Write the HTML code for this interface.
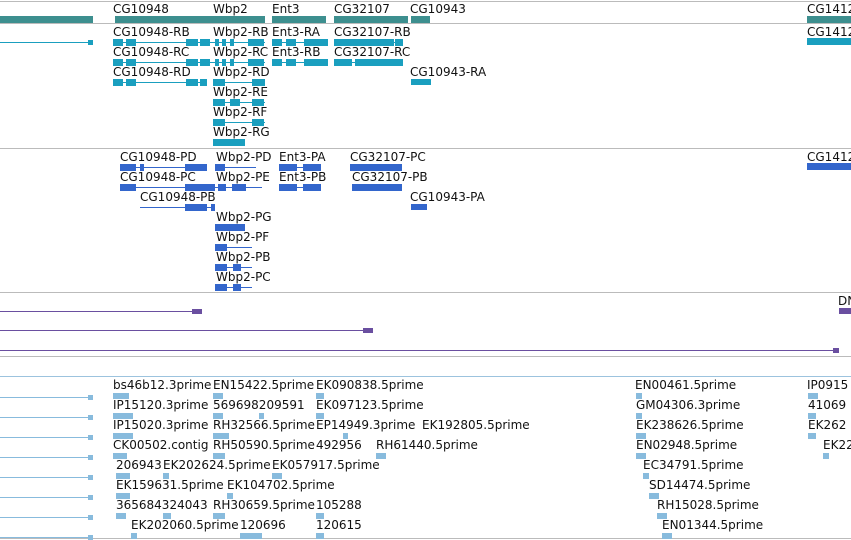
<!DOCTYPE html>
<html><head><meta charset="utf-8"><style>
html,body{margin:0;padding:0;width:851px;height:540px;overflow:hidden;background:#fff;position:relative;font-family:"DejaVu Sans","Liberation Sans",sans-serif}
.t{position:absolute;font-size:12px;line-height:14px;color:#111;white-space:nowrap}
.b{position:absolute}
</style></head><body>
<div id="r"></div>
<script>
var R=document.getElementById('r'),H='';
function t(x,y,s){H+='<div class="t" style="left:'+x+'px;top:'+y+'px">'+s+'</div>';}
function b(x,y,w,h,c){H+='<div class="b" style="left:'+x+'px;top:'+y+'px;width:'+w+'px;height:'+h+'px;background:'+c+'"></div>';}
function hl(x,y,w,c){b(x,y,w,1,c);}
// gene with blocks: cy center, from x1 to x2 line, blocks [[x,w],...]
function g(x1,x2,cy,bl,c,th){th=th||7;hl(x1,cy,x2-x1,c);bl.forEach(function(k){b(k[0],cy-Math.floor(th/2),k[1],th,c);});}
// separators
hl(0,1,851,'#bbb');hl(0,23,851,'#bbb');hl(0,148,851,'#bbb');hl(0,292,851,'#bbb');hl(0,356,851,'#bbb');hl(0,376,851,'#9cc3de');hl(0,538,851,'#bbb');
// track 1
var T='#3d8f8f';
t(113,2,'CG10948');t(213,2,'Wbp2');t(272,2,'Ent3');t(334,2,'CG32107');t(410,2,'CG10943');t(807,2,'CG1412');
b(0,16,93,7,T);b(115,16,150,7,T);b(272,16,54,7,T);b(334,16,74,7,T);b(411,16,19,7,T);b(807,16,44,7,T);
// track 2
var C='#1a9fbf';
g(0,93,42,[[88,5]],C,5);
t(113,25,'CG10948-RB');t(213,25,'Wbp2-RB');t(272,25,'Ent3-RA');t(334,25,'CG32107-RB');t(807,25,'CG1412');
g(113,265,42,[[113,10],[126,10],[186,12],[200,10],[215,4],[222,4],[230,4],[248,16]],C);
g(272,328,42,[[272,10],[286,10],[304,24]],C);g(334,403,42,[[334,60],[395,8]],C);b(807,38,44,7,C);
t(113,45,'CG10948-RC');t(213,45,'Wbp2-RC');t(272,45,'Ent3-RB');t(334,45,'CG32107-RC');
g(113,265,62,[[113,10],[126,10],[186,12],[200,10],[215,4],[222,4],[230,4],[248,16]],C);
g(272,328,62,[[272,10],[286,10],[304,24]],C);g(334,403,62,[[334,18],[355,48]],C);
t(113,65,'CG10948-RD');t(213,65,'Wbp2-RD');t(410,65,'CG10943-RA');
g(113,207,82,[[113,10],[126,10],[186,12],[200,7]],C);g(213,265,82,[[213,12],[252,13]],C);b(411,79,20,6,C);
t(213,85,'Wbp2-RE');g(213,265,102,[[213,12],[230,10],[252,12]],C);
t(213,105,'Wbp2-RF');g(213,265,122,[[213,12],[252,12]],C);
t(213,125,'Wbp2-RG');g(213,245,142,[[213,32]],C);
// track 3
var B='#3366cc';
t(120,150,'CG10948-PD');t(216,150,'Wbp2-PD');t(279,150,'Ent3-PA');t(350,150,'CG32107-PC');t(807,150,'CG1412');
g(120,207,167,[[120,16],[140,4],[185,22]],B);g(215,256,167,[[215,10]],B);g(279,321,167,[[279,18],[303,18]],B);g(350,402,167,[[350,44],[394,8]],B);b(807,163,44,7,B);
t(120,170,'CG10948-PC');t(216,170,'Wbp2-PE');t(279,170,'Ent3-PB');t(352,170,'CG32107-PB');
g(120,262,187,[[120,16],[185,30],[218,8],[232,14]],B);g(279,321,187,[[279,18],[303,18]],B);g(352,402,187,[[352,42],[394,8]],B);
t(140,190,'CG10948-PB');t(410,190,'CG10943-PA');g(140,215,207,[[185,22],[211,4]],B);b(411,204,16,6,B);
t(216,210,'Wbp2-PG');g(215,245,227,[[215,30]],B);
t(216,230,'Wbp2-PF');g(215,252,247,[[215,12]],B);
t(216,250,'Wbp2-PB');g(215,252,267,[[215,12],[233,8]],B);
t(216,270,'Wbp2-PC');g(215,252,287,[[215,12],[233,8]],B);
// track 4
var P='#6a4fa0';
g(0,202,311,[[192,10]],P,5);g(0,373,330,[[363,10]],P,5);g(0,839,350,[[833,6]],P,5);
t(838,294,'DN');b(839,308,12,6,P);
// ESTs
var E='#88bbdd';
for(var i=0;i<8;i++){g(0,93,397+20*i,[[88,5]],E,5);}
var L=[[113,378,'bs46b12.3prime'],[213,378,'EN15422.5prime'],[316,378,'EK090838.5prime'],[635,378,'EN00461.5prime'],[807,378,'IP0915'],
[113,398,'IP15120.3prime'],[213,398,'569698209591'],[316,398,'EK097123.5prime'],[636,398,'GM04306.3prime'],[808,398,'41069'],
[113,418,'IP15020.3prime'],[213,418,'RH32566.5prime'],[316,418,'EP14949.3prime'],[422,418,'EK192805.5prime'],[636,418,'EK238626.5prime'],[808,418,'EK262'],
[113,438,'CK00502.contig'],[213,438,'RH50590.5prime'],[316,438,'492956'],[376,438,'RH61440.5prime'],[636,438,'EN02948.5prime'],[823,438,'EK22'],
[116,458,'206943'],[163,458,'EK202624.5prime'],[272,458,'EK057917.5prime'],[643,458,'EC34791.5prime'],
[116,478,'EK159631.5prime'],[227,478,'EK104702.5prime'],[649,478,'SD14474.5prime'],
[116,498,'365684324043'],[213,498,'RH30659.5prime'],[316,498,'105288'],[657,498,'RH15028.5prime'],
[131,518,'EK202060.5prime'],[240,518,'120696'],[316,518,'120615'],[662,518,'EN01344.5prime']];
L.forEach(function(a){t(a[0],a[1],a[2]);});
var G=[[113,393,16],[213,393,10],[316,393,8],[636,393,6],[808,393,10],
[113,413,20],[213,413,10],[259,413,5],[316,413,8],[636,413,6],[808,413,8],
[113,433,20],[213,433,16],[343,433,5],[636,433,10],[808,433,8],
[113,453,14],[213,453,12],[376,453,10],[636,453,10],[823,453,6],
[116,473,14],[163,473,6],[272,473,10],[643,473,6],
[116,493,14],[227,493,6],[649,493,10],
[116,513,10],[163,513,8],[213,513,12],[316,513,8],[657,513,10],
[131,533,6],[240,533,22],[316,533,8],[662,533,10]];
G.forEach(function(a){b(a[0],a[1],a[2],6,E);});
R.innerHTML=H;
</script>
</body></html>
